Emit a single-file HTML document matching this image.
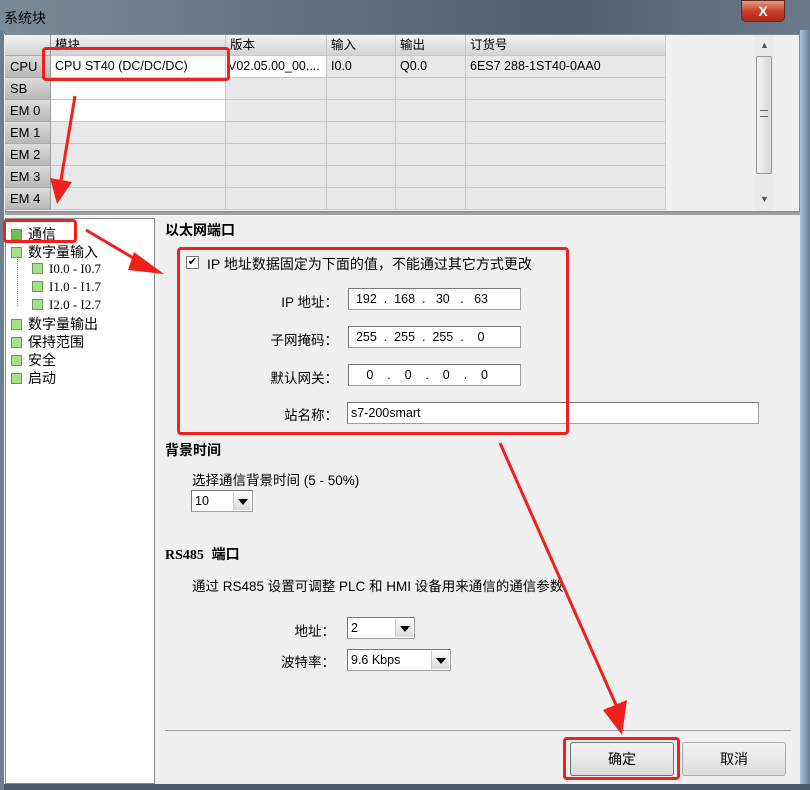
<!DOCTYPE html>
<html><head><meta charset="utf-8"><style>
*{margin:0;padding:0;box-sizing:border-box}
body{width:810px;height:790px;overflow:hidden;position:relative;background:#f0f0f0;font-family:"Liberation Sans","Noto Sans CJK SC",sans-serif;font-size:13px;color:#000}
.a{position:absolute}
.cell{position:absolute;border-right:1px solid #c8c8c8;border-bottom:1px solid #c8c8c8;background:#e8e8e8;height:22px;line-height:21px;padding-left:4px;font-size:12.5px;white-space:nowrap;overflow:hidden}
.rh{background:linear-gradient(#dcdcdc,#b8b8b8);border-right:1px solid #999;border-bottom:1px solid #aaa;font-size:13px;padding-left:5px}
.hd{background:linear-gradient(#f2f2f2,#d4d4d4);height:21px;line-height:20px}
.w{background:#fff}
.tree div{position:absolute;font-size:14px;white-space:nowrap}
.sq{display:inline-block;width:11px;height:11px;border:1px solid #6a9a5a;background:#a6e08a;vertical-align:-1px;margin-right:6px}
.in{position:absolute;background:#fff;border:1px solid #a0a0a0;border-top-color:#777;border-left-color:#777;height:22px;font-size:12.5px;line-height:20px}
.lbl{position:absolute;font-size:13.5px;text-align:right;width:100px}
.dd{position:absolute;right:1px;top:1px;width:18px;height:18px;background:linear-gradient(#fafafa,#dcdcdc);border-left:1px solid #ccc}
.dd:after{content:"";position:absolute;left:4px;top:7px;border:5px solid transparent;border-top:6px solid #000;border-bottom:0}
.btn{position:absolute;border:1px solid #707070;border-radius:3px;background:linear-gradient(#f4f4f4,#dcdcdc);text-align:center;font-size:14px;line-height:32px}
.red{position:absolute;border:3px solid #f0201c;border-radius:4px}
</style></head><body>
<!-- title bar -->
<div class="a" style="left:0;top:0;width:810px;height:34px;background:linear-gradient(90deg,#7b8a99,#5e6f80 40%,#4f6070 70%,#6a7a8a)"></div>
<div class="a" style="left:4px;top:8px;font-size:14px;color:#000">系统块</div>
<div class="a" style="left:741px;top:0;width:44px;height:22px;border-radius:0 0 5px 5px;background:linear-gradient(#e89a8a,#c8402c 50%,#b02818);border:1px solid #5a2a20;color:#fff;font-weight:bold;text-align:center;line-height:20px;font-size:14px">X</div>
<div class="a" style="left:800px;top:30px;width:10px;height:760px;background:linear-gradient(90deg,#a8c8e8,#6a7e90)"></div>
<div class="a" style="left:0;top:784px;width:810px;height:6px;background:#4a5a6a"></div>
<div class="a" style="left:0;top:30px;width:4px;height:760px;background:#6a7e90"></div>

<!-- grid -->
<div class="a" style="left:5px;top:34px;width:795px;height:178px;background:#f0f0f0;border:1px solid #888"></div>
<div class="cell rh hd" style="left:5px;top:35px;width:46px"></div>
<div class="cell hd" style="left:51px;top:35px;width:175px">模块</div>
<div class="cell hd" style="left:226px;top:35px;width:101px">版本</div>
<div class="cell hd" style="left:327px;top:35px;width:69px">输入</div>
<div class="cell hd" style="left:396px;top:35px;width:70px">输出</div>
<div class="cell hd" style="left:466px;top:35px;width:200px">订货号</div>

<div class="cell rh" style="left:5px;top:56px;width:46px">CPU</div>
<div class="cell w" style="left:51px;top:56px;width:175px">CPU ST40 (DC/DC/DC)</div>
<div class="cell w" style="left:226px;top:56px;width:101px;padding-left:2px">V02.05.00_00....</div>
<div class="cell" style="left:327px;top:56px;width:69px">I0.0</div>
<div class="cell" style="left:396px;top:56px;width:70px">Q0.0</div>
<div class="cell" style="left:466px;top:56px;width:200px">6ES7 288-1ST40-0AA0</div>

<div class="cell rh" style="left:5px;top:78px;width:46px">SB</div>
<div class="cell w" style="left:51px;top:78px;width:175px"></div>
<div class="cell" style="left:226px;top:78px;width:101px"></div><div class="cell" style="left:327px;top:78px;width:69px"></div><div class="cell" style="left:396px;top:78px;width:70px"></div><div class="cell" style="left:466px;top:78px;width:200px"></div>
<div class="cell rh" style="left:5px;top:100px;width:46px">EM 0</div>
<div class="cell w" style="left:51px;top:100px;width:175px"></div>
<div class="cell" style="left:226px;top:100px;width:101px"></div><div class="cell" style="left:327px;top:100px;width:69px"></div><div class="cell" style="left:396px;top:100px;width:70px"></div><div class="cell" style="left:466px;top:100px;width:200px"></div>
<div class="cell rh" style="left:5px;top:122px;width:46px">EM 1</div>
<div class="cell" style="left:51px;top:122px;width:175px"></div><div class="cell" style="left:226px;top:122px;width:101px"></div><div class="cell" style="left:327px;top:122px;width:69px"></div><div class="cell" style="left:396px;top:122px;width:70px"></div><div class="cell" style="left:466px;top:122px;width:200px"></div>
<div class="cell rh" style="left:5px;top:144px;width:46px">EM 2</div>
<div class="cell" style="left:51px;top:144px;width:175px"></div><div class="cell" style="left:226px;top:144px;width:101px"></div><div class="cell" style="left:327px;top:144px;width:69px"></div><div class="cell" style="left:396px;top:144px;width:70px"></div><div class="cell" style="left:466px;top:144px;width:200px"></div>
<div class="cell rh" style="left:5px;top:166px;width:46px">EM 3</div>
<div class="cell" style="left:51px;top:166px;width:175px"></div><div class="cell" style="left:226px;top:166px;width:101px"></div><div class="cell" style="left:327px;top:166px;width:69px"></div><div class="cell" style="left:396px;top:166px;width:70px"></div><div class="cell" style="left:466px;top:166px;width:200px"></div>
<div class="cell rh" style="left:5px;top:188px;width:46px">EM 4</div>
<div class="cell" style="left:51px;top:188px;width:175px"></div><div class="cell" style="left:226px;top:188px;width:101px"></div><div class="cell" style="left:327px;top:188px;width:69px"></div><div class="cell" style="left:396px;top:188px;width:70px"></div><div class="cell" style="left:466px;top:188px;width:200px"></div>
<!-- scrollbar -->
<div class="a" style="left:754px;top:35px;width:20px;height:176px;background:#ececec"></div>
<div class="a" style="left:760px;top:40px;font-size:9px;color:#555">▲</div>
<div class="a" style="left:760px;top:194px;font-size:9px;color:#555">▼</div>
<div class="a" style="left:756px;top:56px;width:16px;height:118px;border:1px solid #999;border-radius:2px;background:linear-gradient(90deg,#f4f4f4,#d8d8d8)"></div>
<div class="a" style="left:760px;top:110px;width:8px;height:7px;border-top:1px solid #666;border-bottom:1px solid #666"></div>
<div class="a" style="left:5px;top:212px;width:795px;height:3px;background:#a0a0a0"></div>

<!-- tree -->
<div class="a" style="left:5px;top:218px;width:150px;height:566px;background:#fff;border:1px solid #888"></div>
<div class="tree">
<div style="left:11px;top:224px"><span class="sq" style="background:#6cc050"></span>通信</div>
<div style="left:11px;top:242px"><span class="sq"></span>数字量输入</div>
<div style="left:32px;top:261px;font-family:'Liberation Serif',serif;font-size:13px"><span class="sq"></span>I0.0 - I0.7</div>
<div style="left:32px;top:279px;font-family:'Liberation Serif',serif;font-size:13px"><span class="sq"></span>I1.0 - I1.7</div>
<div style="left:32px;top:297px;font-family:'Liberation Serif',serif;font-size:13px"><span class="sq"></span>I2.0 - I2.7</div>
<div style="left:11px;top:314px"><span class="sq"></span>数字量输出</div>
<div style="left:11px;top:332px"><span class="sq"></span>保持范围</div>
<div style="left:11px;top:350px"><span class="sq"></span>安全</div>
<div style="left:11px;top:368px"><span class="sq"></span>启动</div>
</div>
<div class="a" style="left:17px;top:256px;width:14px;height:50px;border-left:1px dotted #888"></div>

<!-- right -->
<div class="a" style="left:165px;top:220px;font-weight:bold;font-size:14px">以太网端口</div>
<div class="a" style="left:186px;top:256px;width:13px;height:13px;border:1px solid #777;background:#fff;font-size:11px;line-height:11px;text-align:center">✔</div>
<div class="a" style="left:207px;top:254px;font-size:14px">IP 地址数据固定为下面的值，不能通过其它方式更改</div>
<div class="lbl" style="left:238px;top:291px">IP 地址：</div>
<div class="in" style="left:348px;top:288px;width:173px;word-spacing:0">&nbsp;&nbsp;192 &nbsp;. &nbsp;168 &nbsp;. &nbsp;&nbsp;30 &nbsp;&nbsp;. &nbsp;&nbsp;63</div>
<div class="lbl" style="left:238px;top:329px">子网掩码：</div>
<div class="in" style="left:348px;top:326px;width:173px">&nbsp;&nbsp;255 &nbsp;. &nbsp;255 &nbsp;. &nbsp;255 &nbsp;. &nbsp;&nbsp;&nbsp;0</div>
<div class="lbl" style="left:238px;top:367px">默认网关：</div>
<div class="in" style="left:348px;top:364px;width:173px">&nbsp;&nbsp;&nbsp;&nbsp;&nbsp;0 &nbsp;&nbsp;&nbsp;. &nbsp;&nbsp;&nbsp;0 &nbsp;&nbsp;&nbsp;. &nbsp;&nbsp;&nbsp;0 &nbsp;&nbsp;&nbsp;. &nbsp;&nbsp;&nbsp;0</div>
<div class="lbl" style="left:238px;top:404px">站名称：</div>
<div class="in" style="left:347px;top:402px;width:412px;padding-left:3px">s7-200smart</div>

<div class="a" style="left:165px;top:440px;font-weight:bold;font-size:14px">背景时间</div>
<div class="a" style="left:192px;top:469px;font-size:13.5px">选择通信背景时间 (5 - 50%)</div>
<div class="in" style="left:191px;top:490px;width:62px;padding-left:3px">10<span class="dd"></span></div>

<div class="a" style="left:165px;top:544px;font-weight:bold;font-size:14px"><span style="font-family:'Liberation Serif',serif">RS485</span>&nbsp; 端口</div>
<div class="a" style="left:192px;top:575px;font-size:13.5px">通过 RS485 设置可调整 PLC 和 HMI 设备用来通信的通信参数</div>
<div class="lbl" style="left:235px;top:620px">地址：</div>
<div class="in" style="left:347px;top:617px;width:68px;padding-left:3px">2<span class="dd"></span></div>
<div class="lbl" style="left:235px;top:651px">波特率：</div>
<div class="in" style="left:347px;top:649px;width:104px;padding-left:3px">9.6 Kbps<span class="dd"></span></div>

<div class="a" style="left:165px;top:730px;width:626px;height:1px;background:#a0a0a0"></div>
<div class="btn" style="left:570px;top:742px;width:104px;height:34px">确定</div>
<div class="btn" style="left:682px;top:742px;width:104px;height:34px;border-color:#aaa">取消</div>

<!-- annotations -->
<div class="red" style="left:42px;top:47px;width:188px;height:34px"></div>
<div class="red" style="left:3px;top:219px;width:74px;height:24px"></div>
<div class="red" style="left:177px;top:247px;width:392px;height:188px"></div>
<div class="red" style="left:563px;top:737px;width:117px;height:43px"></div>
<svg class="a" style="left:0;top:0" width="810" height="790">
<g fill="#f0201c" stroke="#f0201c">
<line x1="75" y1="96" x2="61" y2="180" stroke-width="3"/>
<polygon points="50,178 72,182 57,204" stroke="none"/>
<line x1="86" y1="230" x2="140" y2="262" stroke-width="3"/>
<polygon points="134,252 164,274 128,270" stroke="none"/>
<line x1="500" y1="443" x2="616" y2="705" stroke-width="3"/>
<polygon points="603,710 627,700 622,735" stroke="none"/>
</g></svg>
</body></html>
